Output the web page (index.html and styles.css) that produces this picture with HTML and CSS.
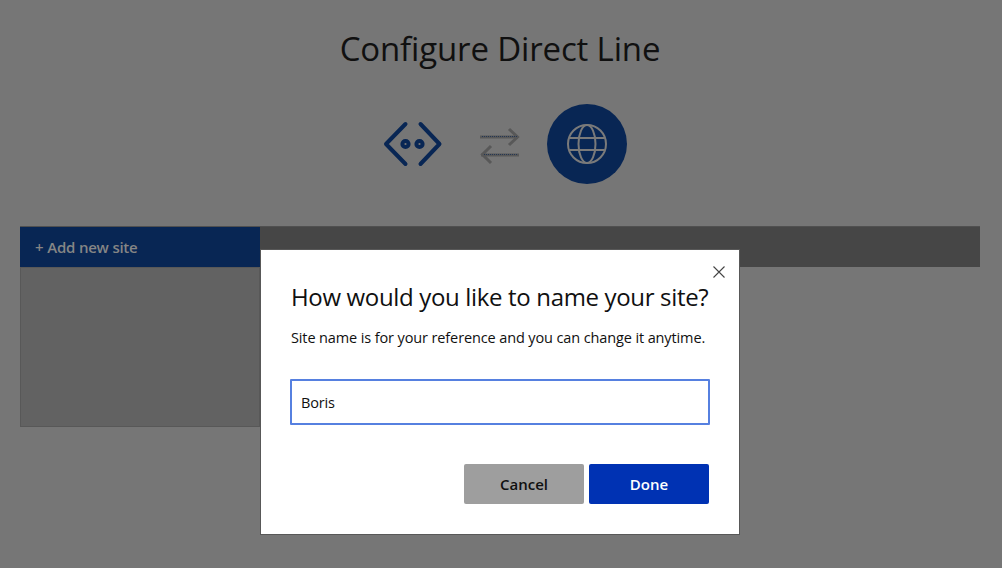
FILE: index.html
```html
<!DOCTYPE html>
<html lang="en">
<head>
<meta charset="utf-8">
<title>Configure Direct Line</title>
<link rel="stylesheet" href="styles.css">
</head>
<body>
<main class="page">
  <h1 class="title"><span>Configure Direct Line</span></h1>
  <div class="diagram">
    <svg class="bot" width="60" height="48" viewBox="0 0 60 48" fill="none" stroke="#082654" stroke-width="4" stroke-linecap="round" stroke-linejoin="round">
      <path d="M22.500 4 3 24l19.500 20M37.500 4 56.500 24l-19 20"/>
      <circle cx="22.500" cy="24" r="3.100" stroke-width="4"/>
      <circle cx="36.500" cy="24" r="3.100" stroke-width="4"/>
    </svg>
    <svg class="arrows" width="42" height="38" viewBox="0 0 42 38" fill="none" stroke="#585858" stroke-width="3">
      <path d="M30 2 38.500 10 30 18M12 19 3.500 27.500 12 36"/>
      <path d="M1 10h38M2 28h38" stroke-width="3"/>
      <path d="M3 9.500h35M5 27.500h34" stroke="#243754" stroke-width="1" stroke-dasharray="1 1"/>
    </svg>
    <div class="globe">
      <svg width="42" height="42" viewBox="0 0 42 42" fill="none" stroke="#7a7a7a" stroke-width="2">
        <circle cx="21" cy="21" r="19"/>
        <ellipse cx="21" cy="21" rx="8.500" ry="19"/>
        <path d="M3.500 15h35M3.500 27h35"/>
      </svg>
    </div>
  </div>
  <section class="sites">
    <div class="bar"><button class="add"><span>+ Add new site</span></button></div>
    <div class="list"></div>
  </section>
</main>
<div class="dialog" role="dialog">
  <button class="close" aria-label="Close">
    <svg width="12" height="12" viewBox="0 0 12 12" stroke="#444" stroke-width="1.1"><path d="M.5.5l11 11M11.500.5l-11 11"/></svg>
  </button>
  <h2 class="heading"><span>How would you like to name your site?</span></h2>
  <p class="note"><span>Site name is for your reference and you can change it anytime.</span></p>
  <input class="name" type="text" value="Boris">
  <div class="actions">
    <button class="btn cancel">Cancel</button>
    <button class="btn done">Done</button>
  </div>
</div>
</body>
</html>
```
FILE: styles.css
```css
* { box-sizing: border-box; }
body {
  margin: 0;
  height: 568px;
  overflow: hidden;
  background: #767676;
  color: #101010;
  font-family: "Open Sans", "Noto Sans", sans-serif;
}
button, input { font: inherit; border: 0; padding: 0; }
h1, h2, p { margin: 0; font-weight: 400; white-space: nowrap; }
.page { width: 960px; margin-left: 20px; padding-top: 25px; }
.title { text-align: center; font-size: 33px; line-height: 48px; letter-spacing: -0.15px; }
.diagram { display: flex; align-items: center; height: 80px; margin-top: 31px; padding-left: 363px; }
.bot, .arrows, .globe svg { display: block; }
.arrows { margin-left: 36px; margin-top: 4px; }
.globe {
  display: flex;
  align-items: center;
  justify-content: center;
  width: 80px;
  height: 80px;
  margin-left: 26px;
  border-radius: 50%;
  background: #082654;
}
.sites { margin-top: 42px; }
.bar { height: 41px; background: #464646; border-top: 1px solid #505050; }
.add {
  display: block;
  width: 240px;
  height: 40px;
  padding-left: 15px;
  text-align: left;
  background: #082654;
  color: #858585;
  font-size: 15px;
  font-weight: 600;
  letter-spacing: -0.3px;
  word-spacing: 0.4px;
}
.list { width: 240px; height: 160px; background: #626262; border: 1px solid #585858; }
.dialog {
  position: absolute;
  left: 260px;
  top: 249px;
  width: 480px;
  height: 286px;
  padding: 14px 30px 30px;
  border: 1px solid #585858;
  background: #fff;
}
.close { display: block; margin: 2px -16px 0 auto; width: 12px; height: 12px; background: none; }
.close svg { display: block; }
.heading { margin-top: 2px; font-size: 24px; line-height: 34px; letter-spacing: -0.34px; }
.note { margin-top: 12px; font-size: 14.5px; line-height: 24px; letter-spacing: -0.12px; }
.name {
  display: block;
  width: 420px;
  height: 46px;
  margin: 29px 0 39px -1px;
  padding: 0 9px;
  border: 2px solid #5680e0;
  border-radius: 1px;
  background: #fff;
  color: #101010;
  font-size: 14.5px;
  letter-spacing: -0.2px;
  outline: 0;
}
.actions { display: flex; justify-content: flex-end; gap: 5px; }
.btn { width: 120px; height: 40px; border-radius: 2px; font-size: 15px; font-weight: 600; }
.cancel { background: #9e9e9e; color: #101010; }
.done { background: #0032b3; color: #fff; }
```
